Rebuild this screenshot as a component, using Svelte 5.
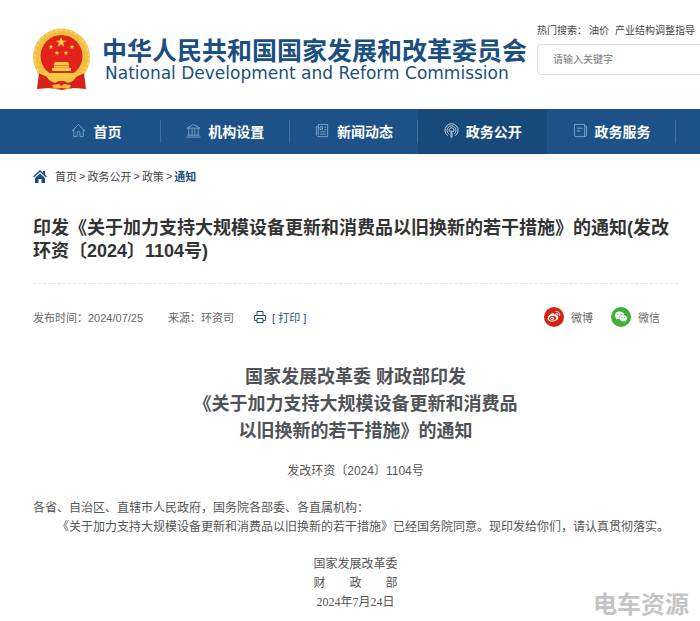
<script lang="ts">
	interface NavItem {
		label: string;
		icon: string;
		active?: boolean;
	}

	const navItems: NavItem[] = [
		{ label: '首页', icon: 'home' },
		{ label: '机构设置', icon: 'bank' },
		{ label: '新闻动态', icon: 'news' },
		{ label: '政务公开', icon: 'signal', active: true },
		{ label: '政务服务', icon: 'service' }
	];

	const crumbs = ['首页', '政务公开', '政策'];
	const hotWords = ['油价', '产业结构调整指导'];

	let keyword = $state('');
</script>

<div class="page">
	<header>
		<a class="logo" href="#home">
			<svg class="emblem" viewBox="7 5 60 63" aria-hidden="true">
				<circle cx="36.500" cy="34" r="28.500" fill="#efbf42" />
				<circle cx="36.500" cy="34" r="27" fill="none" stroke="#f6d468" stroke-width="2" stroke-dasharray="3 2" />
				<circle cx="36.500" cy="33" r="21" fill="#e2231b" />
				<g fill="#f9cd45">
					<path d="M36 14l1.300 3.600 3.800.1-3 2.300 1.100 3.700-3.200-2.200-3.200 2.200 1.100-3.700-3-2.300 3.800-.1z" />
					<path d="M26 21.500l.7 1.600 1.700.1-1.300 1.100.4 1.700-1.500-.9-1.500.9.4-1.700-1.300-1.100 1.700-.1z" />
					<path d="M47 21.500l.7 1.600 1.700.1-1.300 1.100.4 1.700-1.500-.9-1.500.9.4-1.700-1.300-1.100 1.700-.1z" />
					<path d="M32 27.500l.7 1.600 1.700.1-1.300 1.100.4 1.700-1.500-.9-1.500.9.4-1.700-1.300-1.100 1.700-.1z" />
					<path d="M41 27.500l.7 1.600 1.700.1-1.300 1.100.4 1.700-1.500-.9-1.500.9.4-1.700-1.300-1.100 1.700-.1z" />
					<path d="M30 39h13l1.500 3h-16zM29 42.500h15v2.200H29zM27 45h19v3H27z" />
					<path d="M18 50h37l-4 5H22z" />
				</g>
				<path d="M14 50 Q20 54 26 54 L36.500 58 L47 54 Q53 54 59 50 L61 66 L49 65 L36.500 67 L24 65 L12 66 Z" fill="#d8211b" />
				<path d="M20 51 Q29 52 33 56 Q36.500 51 40 56 Q44 52 53 51 Q50 58 43 60 Q38 57 36.500 58 Q35 57 30 60 Q23 58 20 51 Z" fill="#f3c446" />
				<path d="M27 62 L34 61 L36.500 63 L39 61 L46 62 L44 66 L36.500 65 L29 66 Z" fill="#efb534" />
			</svg>
			<span class="names">
				<span class="name-cn">中华人民共和国国家发展和改革委员会</span>
				<span class="name-en">National Development and Reform Commission</span>
			</span>
		</a>
		<div class="search">
			<div class="hot">
				<span>热门搜索：</span>
				{#each hotWords as word}
					<a href="#search">{word}</a>
				{/each}
			</div>
			<input type="text" aria-label="搜索" placeholder="请输入关键字" bind:value={keyword} />
		</div>
	</header>

	<nav>
		{#each navItems as item}
			<a href="#nav" class:active={item.active}>
				<svg viewBox="0 0 16 16" aria-hidden="true">
					{#if item.icon === 'home'}
						<path d="M1 8.500 8 1.500l7 7M3 7v7.500h3.500V10.500q0-1.500 1.500-1.500t1.500 1.500v4H13V7" />
					{:else if item.icon === 'bank'}
						<path d="M1 5.500 8 1.500l7 4zM3 6v7M6.500 6v7M9.500 6v7M13 6v7M1.500 13h13M.5 15h15" />
					{:else if item.icon === 'news'}
						<path d="M3.500 1.500h10v13h-11q-1-1-1-2.500V4h2zM3.500 4v9M5.500 4h2.500v3H5.500zM10 4.500h2M10 7h2M5.500 9.500h6M5.500 12h6" />
					{:else if item.icon === 'signal'}
						<path d="M4 13.500A7 7 0 1 1 12 13.500M5 11.500A4.800 4.800 0 1 1 11 11.500M6.200 9.500A2.600 2.600 0 1 1 9.800 9.500M7.500 8v7.500M8.500 8v7.500" />
					{:else}
						<path d="M1.500 1.500h11v13h-9q-2 0-2-2zM12.500 3.500h2v9q0 2-2 2M4 5.500h6M4 8.500h4" />
					{/if}
				</svg>
				{item.label}
			</a>
		{/each}
	</nav>

	<main>
		<div class="crumbs">
			<svg viewBox="0 0 14 13" aria-hidden="true">
				<path d="M7 0 0 6.500l1 1 6-5.400 6 5.400 1-1-2-1.900V1h-2v1.700z" />
				<path d="M2 8v5h3.500V9h3v4H12V8L7 3.500z" />
			</svg>
			{#each crumbs as crumb}
				<a href="#crumb">{crumb}</a>
				<span>&gt;</span>
			{/each}
			<a class="current" href="#notice">通知</a>
		</div>

		<h1>印发《关于加力支持大规模设备更新和消费品以旧换新的若干措施》的通知(发改环资〔2024〕1104号)</h1>

		<div class="meta">
			<span class="date">发布时间：2024/07/25</span>
			<span class="source">来源：环资司</span>
			<button type="button" class="print">
				<svg viewBox="0 0 12 12" aria-hidden="true">
					<path d="M3 4.500v-4h6v4M3 9.500H.5v-5h11v5H9M3 7.500h6v4H3z" />
				</svg>
				[ 打印 ]
			</button>
			<div class="share">
				<a href="#weibo">
					<svg viewBox="0 0 20 20" aria-hidden="true">
						<circle cx="10" cy="10" r="10" fill="#cf2415" />
						<path d="M8.500 6.300c1-.3 1.900 0 1.600 1.300 1.500-.5 3-.3 2.600 1.200 1.200.4 1.800 1.200 1.500 2.300-.5 2-3 3.400-5.800 3.400-2.700 0-4.800-1.200-4.800-3.100 0-1.800 2.600-4.500 4.900-5.100z" fill="#fff" />
						<ellipse cx="8.600" cy="11.300" rx="3.700" ry="2.300" fill="#cf2415" transform="rotate(-10 8.600 11.300)" />
						<circle cx="8.200" cy="11.500" r="1.800" fill="#fff" />
						<circle cx="7.900" cy="11.700" r=".8" fill="#cf2415" />
						<path d="M12 4.600c2.400-.4 4.300 1.500 3.700 3.900M12.200 6.500c1.200-.2 2 .6 1.700 1.800" fill="none" stroke="#fff" stroke-linecap="round" />
					</svg>
					微博
				</a>
				<a href="#wechat">
					<svg viewBox="0 0 20 20" aria-hidden="true">
						<circle cx="10" cy="10" r="10" fill="#3eb135" />
						<path d="M8.500 4.500c-2.700 0-4.700 1.600-4.700 3.700 0 1.200.6 2.200 1.600 2.900L5 12.600l1.800-.9c.5.100 1.100.2 1.700.2 2.700 0 4.700-1.600 4.700-3.700s-2-3.700-4.700-3.700z" fill="#fff" />
						<path d="M12.200 8c-2.300 0-4.100 1.500-4.100 3.300s1.800 3.300 4.100 3.300c.5 0 1-.1 1.400-.2l1.500.8-.4-1.300c1-.6 1.600-1.500 1.600-2.600 0-1.800-1.800-3.300-4.100-3.300z" fill="#fff" stroke="#3eb135" stroke-width=".5" />
						<g fill="#3eb135">
							<circle cx="6.900" cy="7.200" r=".6" />
							<circle cx="10" cy="7.200" r=".6" />
							<circle cx="10.900" cy="10.500" r=".5" />
							<circle cx="13.600" cy="10.500" r=".5" />
						</g>
					</svg>
					微信
				</a>
			</div>
		</div>

		<article>
			<h2>
				国家发展改革委 财政部印发<br />
				《关于加力支持大规模设备更新和消费品<br />
				以旧换新的若干措施》的通知
			</h2>
			<p class="number">发改环资〔2024〕1104号</p>
			<p>各省、自治区、直辖市人民政府，国务院各部委、各直属机构：</p>
			<p class="indent">《关于加力支持大规模设备更新和消费品以旧换新的若干措施》已经国务院同意。现印发给你们，请认真贯彻落实。</p>
			<div class="sign">
				<p>国家发展改革委</p>
				<p>财　　政　　部</p>
				<p>2024年7月24日</p>
			</div>
		</article>
	</main>

	<div class="watermark">电车资源</div>
</div>

<style>
	:global(body) {
		margin: 0;
		background: #fff;
	}
	.page {
		position: relative;
		overflow: hidden;
		padding-bottom: 9px;
		font-family: 'Liberation Sans', 'Noto Sans CJK SC', sans-serif;
		font-size: 11px;
		color: #555;
	}
	a {
		color: inherit;
		text-decoration: none;
	}
	h1,
	h2,
	p {
		margin: 0;
	}
	svg {
		flex: none;
	}

	header {
		display: flex;
		height: 109px;
		padding-left: 32px;
		box-sizing: border-box;
	}
	.logo {
		display: flex;
		flex: none;
		align-items: center;
		gap: 10px;
		padding-top: 10px;
		color: #1b4f82;
	}
	.emblem {
		width: 60px;
		height: 63px;
	}
	.names {
		display: flex;
		flex-direction: column;
		white-space: nowrap;
	}
	.name-cn {
		font-size: 25px;
		line-height: 26px;
		font-weight: bold;
	}
	.name-en {
		padding-left: 3px;
		font-family: 'DejaVu Sans', sans-serif;
		font-size: 17px;
		line-height: 18px;
	}
	.search {
		flex: 1;
		min-width: 0;
		padding-top: 23px;
		padding-left: 10px;
	}
	.hot {
		display: flex;
		gap: 6px;
		height: 16px;
		font-size: 10px;
		line-height: 16px;
		white-space: nowrap;
		color: #444;
	}
	.hot span {
		margin-right: -4px;
	}
	input {
		width: 100%;
		min-width: 180px;
		height: 31px;
		margin-top: 5px;
		padding: 0 15px;
		box-sizing: border-box;
		border: 1px solid #ddd;
		border-radius: 4px;
		font-family: inherit;
		font-size: 10px;
	}
	input::placeholder {
		color: #777;
	}

	nav {
		display: grid;
		grid-template-columns: repeat(5, 1fr);
		height: 45px;
		padding: 0 24px 0 32px;
		background: #1c5287;
	}
	nav a {
		position: relative;
		display: flex;
		align-items: center;
		justify-content: center;
		gap: 7px;
		padding-bottom: 2px;
		font-size: 14px;
		font-weight: bold;
		color: #fff;
	}
	nav a::after {
		content: '';
		position: absolute;
		right: 0;
		top: 11px;
		bottom: 11px;
		width: 1px;
		background: #3f6f9f;
	}
	nav a.active {
		background: #184a79;
	}
	nav a.active::after {
		display: none;
	}
	nav svg {
		width: 15px;
		height: 15px;
		fill: none;
		stroke: #7fa6c9;
	}
	nav .active svg {
		stroke: #c3d6e8;
	}

	main {
		padding: 0 22px 0 33px;
	}
	.crumbs {
		display: flex;
		align-items: center;
		gap: 2px;
		height: 44px;
		color: #444;
	}
	.crumbs svg {
		width: 14px;
		height: 13px;
		margin-right: 6px;
		fill: #1b4f82;
	}
	.crumbs .current {
		font-weight: bold;
		color: #1b4f82;
	}
	h1 {
		padding: 19px 0 20px;
		border-bottom: 1px dashed #e6e6e6;
		font-size: 18px;
		line-height: 23px;
		color: #333;
	}
	.meta {
		display: flex;
		align-items: center;
		height: 20px;
		padding: 23px 18px 37px 0;
		color: #666;
	}
	.source {
		margin: 0 20px 0 25px;
	}
	.print {
		display: flex;
		align-items: center;
		gap: 6px;
		padding: 0;
		border: 0;
		background: none;
		font: inherit;
		color: #1b4f82;
	}
	.print svg {
		width: 12px;
		height: 12px;
		fill: none;
		stroke: #1b4f82;
	}
	.share {
		display: flex;
		gap: 18px;
		margin-left: auto;
	}
	.share a {
		display: flex;
		align-items: center;
		gap: 7px;
	}
	.share svg {
		width: 20px;
		height: 20px;
	}

	article {
		font-size: 12px;
		line-height: 19px;
	}
	h2 {
		font-size: 18px;
		line-height: 27px;
		text-align: center;
		color: #4f5357;
	}
	.number {
		padding: 17px 0 18px;
		text-align: center;
	}
	.indent {
		text-indent: 24px;
	}
	.sign {
		padding-top: 18px;
		font-family: 'Liberation Serif', 'Noto Sans CJK SC', serif;
		text-align: center;
	}
	.watermark {
		position: absolute;
		right: 11px;
		bottom: 2px;
		font-size: 24px;
		line-height: 28px;
		font-weight: bold;
		color: #c4c4c4;
	}
</style>
